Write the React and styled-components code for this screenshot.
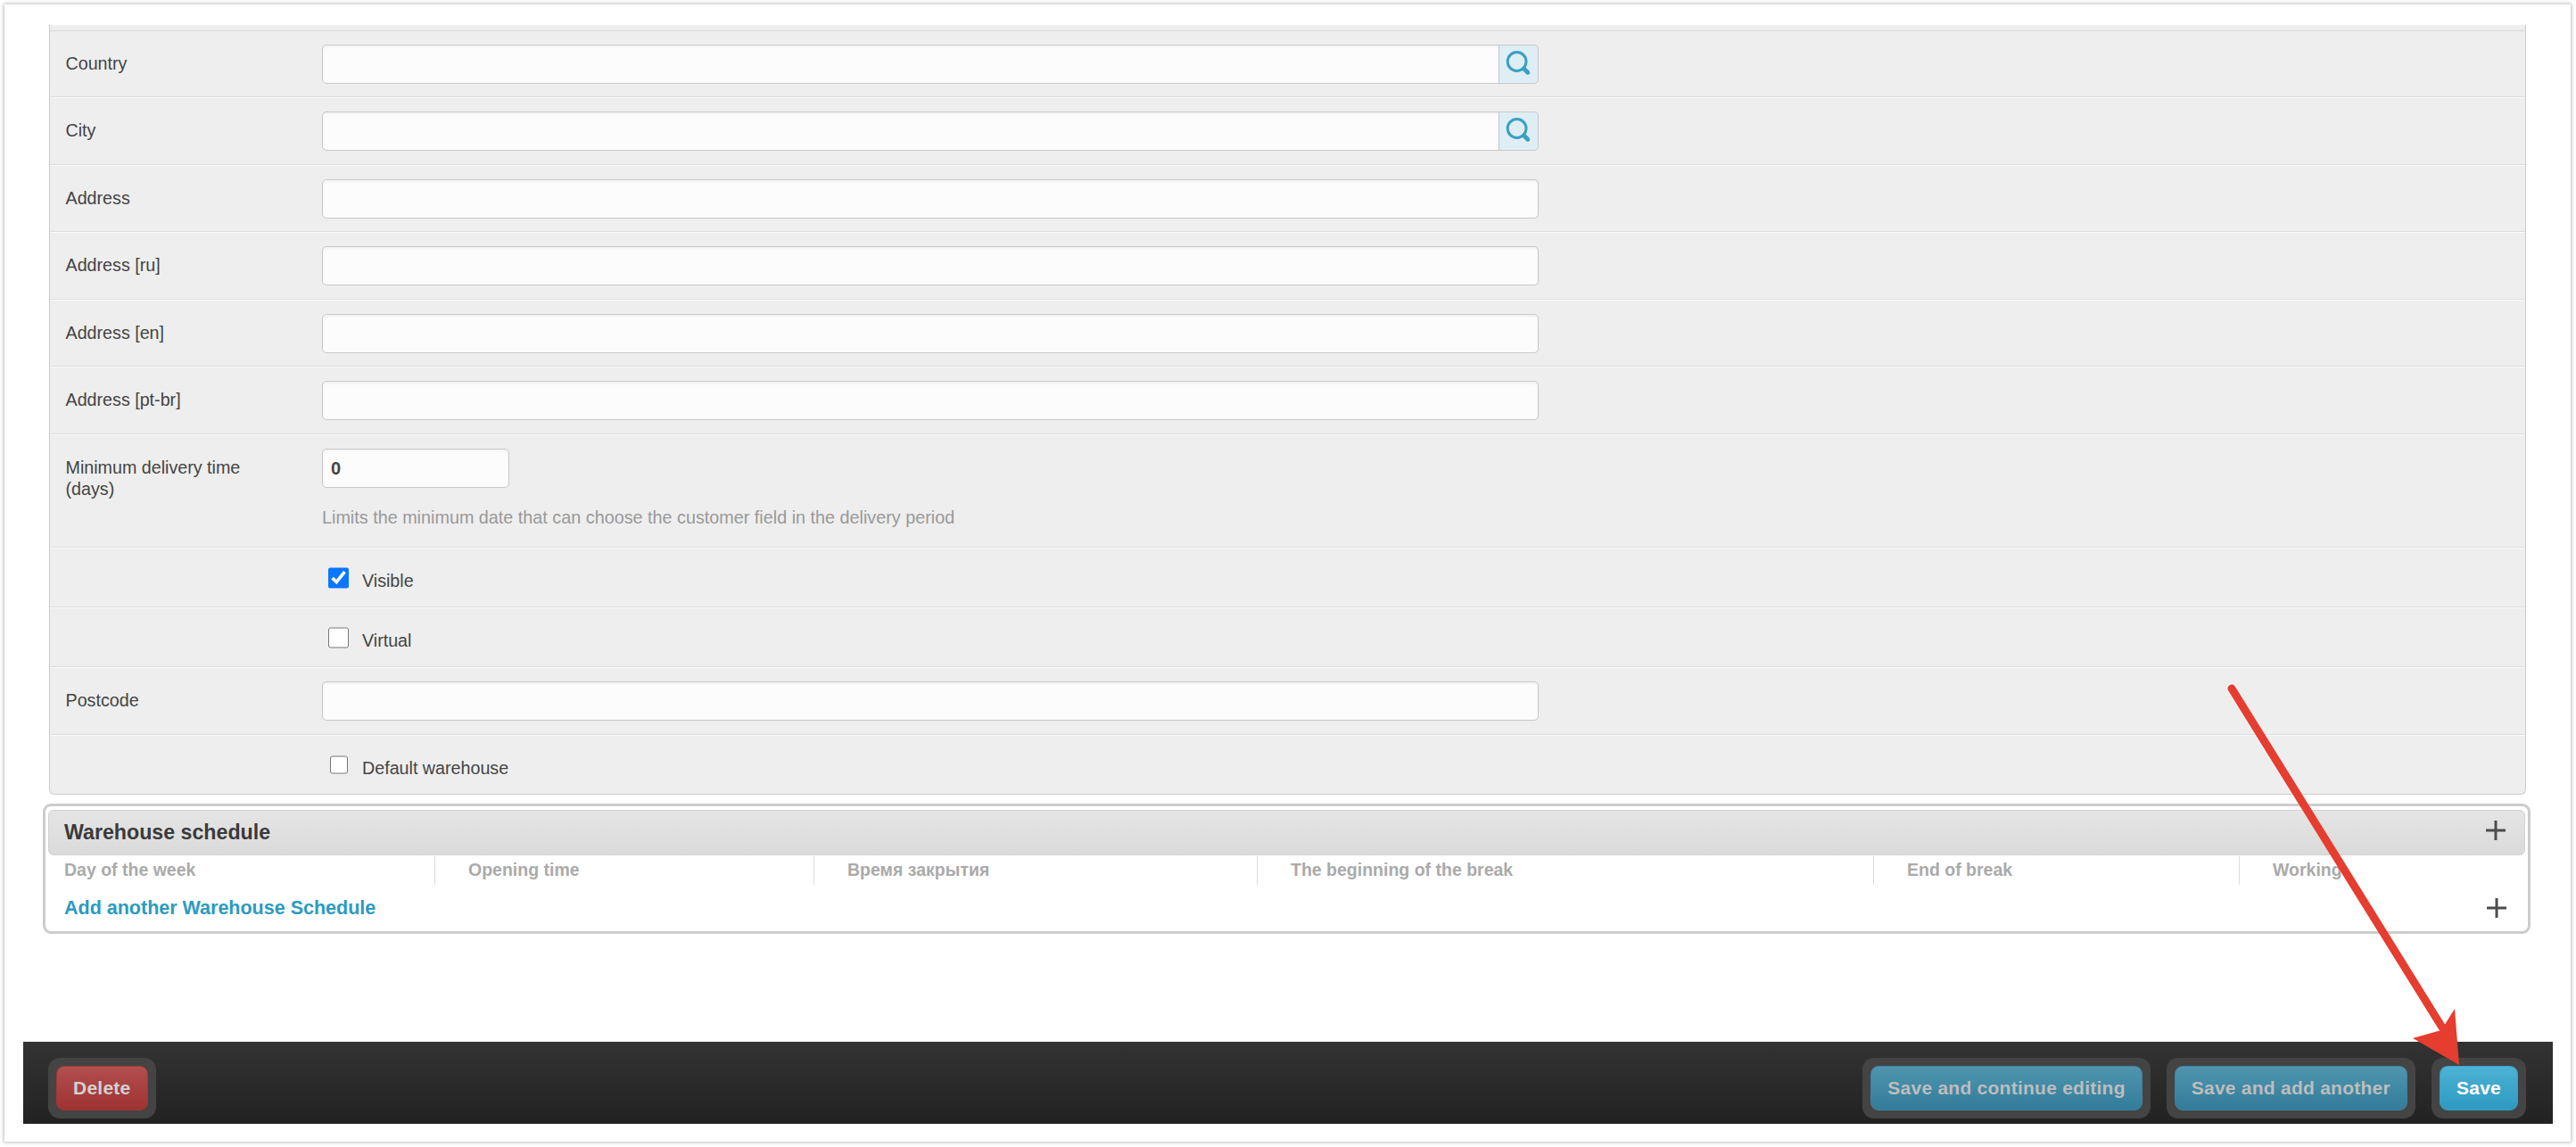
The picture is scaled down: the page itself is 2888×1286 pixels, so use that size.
import React from 'react';
import styled, { createGlobalStyle } from 'styled-components';

const GlobalStyle = createGlobalStyle`
  html, body {
    margin: 0;
    padding: 0;
    background: #fff;
    overflow: hidden;
  }
  body {
    font-family: "Liberation Sans", Arial, sans-serif;
    color: #333;
  }
`;

const Page = styled.div`
  position: relative;
  width: 2888px;
  height: 1286px;
  padding: 5px 6px 6px 5px;
  box-sizing: border-box;
`;

const Frame = styled.div`
  height: 100%;
  box-sizing: border-box;
  display: flex;
  flex-direction: column;
  background: #fff;
  padding: 22.5px 20px 20px 21px;
  box-shadow: 0 0 4px 1px #bdbdbd;
`;

const Panel = styled.div`
  margin: 0 30px 0 28.5px;
  padding-top: 6px;
  background: #eee;
  border: 1px solid #ccc;
  border-top: none;
  border-radius: 0 0 6px 6px;
`;

const Row = styled.div`
  display: grid;
  grid-template-columns: 287.5px 1fr;
  padding: ${p => p.$top || 15}px 0 ${p => p.$bottom || 14.6}px 18px;
  border-top: 1px solid #fafafa;
  border-bottom: ${p => (p.$last ? 'none' : '1px solid #ddd')};
  &:first-child {
    border-top-color: #d8d8d8;
  }
`;

const Label = styled.label`
  font-size: 19.7px;
  line-height: 23.5px;
  padding-top: 10px;
  color: #444;
`;

const InputGroup = styled.div`
  display: flex;
  width: 1364px;
`;

const TextInput = styled.input`
  box-sizing: border-box;
  width: ${p => p.$width || 1364}px;
  flex: ${p => (p.$grow ? 1 : 'none')};
  min-width: 0;
  height: 44px;
  display: block;
  padding: 0 9px;
  margin: 0;
  outline: none;
  font: bold 20px "Liberation Sans", Arial, sans-serif;
  color: #444;
  background: #fcfcfc;
  border: 1px solid #c8c8c8;
  border-radius: ${p => (p.$grow ? '5px 0 0 5px' : '5px')};
  box-shadow: inset 0 2px 3px #f2f2f2;
`;

const Lookup = styled.a`
  box-sizing: border-box;
  width: 45px;
  height: 44px;
  display: flex;
  align-items: center;
  justify-content: center;
  background: #dfeef5;
  border: 1px solid #c8c8c8;
  border-left: 1px solid #c4c4c4;
  border-radius: 0 5px 5px 0;
  margin-left: -1px;
`;

const Help = styled.p`
  margin: 21px 0 6.4px;
  font-size: 19.8px;
  line-height: 24px;
  color: #999;
`;

const CheckLabel = styled.label`
  display: flex;
  align-items: center;
  height: ${p => (p.$small ? 21 : 24)}px;
  font-size: 19.7px;
  color: #444;
  margin-left: ${p => (p.$small ? 9 : 7)}px;
`;

const Check = styled.input`
  margin: 0 ${p => (p.$small ? 16 : 15)}px 0 0;
  width: ${p => (p.$small ? 20 : 23)}px;
  height: ${p => (p.$small ? 21 : 24)}px;
  accent-color: #0b76ff;
`;

const CheckText = styled.span`
  line-height: 17px;
  padding-top: 7px;
`;

const Fieldset = styled.section`
  margin: 9.5px 25px 0 21.5px;
  padding: 4px 3px 0;
  border: 3px solid #ccc;
  border-radius: 9px;
`;

const Header = styled.div`
  box-sizing: border-box;
  height: 51px;
  display: flex;
  align-items: center;
  justify-content: space-between;
  padding: 0 21px 0 17.5px;
  background: linear-gradient(#e5e5e5, #dadada);
  border: 1px solid #d2d2d2;
  border-radius: 6px;
`;

const Title = styled.h2`
  margin: 0;
  font-size: 23.2px;
  font-weight: bold;
  color: #3a3a3a;
`;

const PlusIcon = styled.svg`
  display: block;
  margin-bottom: ${p => p.$up || 0}px;
`;

const Columns = styled.div`
  display: grid;
  grid-template-columns: 434.5px 425px 497px 691px 410px 1fr;
  height: 32px;
  margin-top: 1px;
`;

const Column = styled.div`
  padding-left: ${p => (p.$first ? 18.5 : 37)}px;
  font-size: 19.5px;
  font-weight: bold;
  line-height: 30px;
  color: #aaa;
  border-right: ${p => (p.$end ? 'none' : '1px solid #ddd')};
`;

const AddRow = styled.div`
  height: 52.5px;
  display: flex;
  align-items: center;
  justify-content: space-between;
  padding: 0 21px 0 18.5px;
`;

const AddLink = styled.a`
  font-size: 21.5px;
  font-weight: bold;
  color: #2a9bc1;
`;

const Footer = styled.div`
  margin-top: auto;
  height: 92px;
  box-sizing: border-box;
  padding: 18px 30px 6px 28px;
  display: flex;
  justify-content: space-between;
  background: linear-gradient(#333, #222);
`;

const Actions = styled.div`
  display: flex;
  gap: 18px;
`;

const ButtonWrap = styled.div`
  padding: 9px;
  background: #444;
  border-radius: 13px;
`;

const tones = {
  danger: { bg: 'linear-gradient(#b24f4f, #a03232)', text: '#d2d2d2', line: '#9c3a3a' },
  muted: { bg: 'linear-gradient(#4f95af, #327c9a)', text: '#bdbdbd', line: '#3f83a0' },
  primary: { bg: 'linear-gradient(#4db2d5, #2e9ac1)', text: '#fff', line: '#3a9fc5' },
};

const Button = styled.button`
  box-sizing: border-box;
  height: 50px;
  padding: 0 18px;
  font: bold 21px "Liberation Sans", Arial, sans-serif;
  letter-spacing: 0.25px;
  color: ${p => tones[p.$tone].text};
  background: ${p => tones[p.$tone].bg};
  border: 1px solid ${p => tones[p.$tone].line};
  border-radius: 9px;
`;

const ArrowLayer = styled.svg`
  position: absolute;
  left: 0;
  top: 0;
  pointer-events: none;
`;

const Search = () => (
  <svg width="30" height="30" viewBox="0 0 30 30" fill="none">
    <circle cx="12.6" cy="12" r="10.4" stroke="#3aa0c2" strokeWidth="3" />
    <path d="M20.5 20 L24.8 24.2" stroke="#3aa0c2" strokeWidth="5" strokeLinecap="round" />
  </svg>
);

const Plus = ({ up }) => (
  <PlusIcon $up={up} width="22" height="22" viewBox="0 0 22 22">
    <path d="M0 11 H22 M11 0 V22" stroke="#4d4d4d" strokeWidth="3" />
  </PlusIcon>
);

const plainRows = ['Address', 'Address [ru]', 'Address [en]', 'Address [pt-br]'];

const columns = [
  'Day of the week',
  'Opening time',
  'Время закрытия',
  'The beginning of the break',
  'End of break',
  'Working',
];

const App = () => {
  return (
    <Page>
      <GlobalStyle />
      <Frame>
        <Panel>
          {['Country', 'City'].map(name => (
            <Row key={name}>
              <Label>{name}</Label>
              <InputGroup>
                <TextInput $grow />
                <Lookup><Search /></Lookup>
              </InputGroup>
            </Row>
          ))}
          {plainRows.map(name => (
            <Row key={name}>
              <Label>{name}</Label>
              <div><TextInput /></div>
            </Row>
          ))}
          <Row>
            <Label>Minimum delivery time<br />(days)</Label>
            <div>
              <TextInput $width={210} defaultValue="0" />
              <Help>Limits the minimum date that can choose the customer field in the delivery period</Help>
            </div>
          </Row>
          <Row $top={21.4} $bottom={19.6}>
            <span />
            <CheckLabel>
              <Check type="checkbox" defaultChecked />
              <CheckText>Visible</CheckText>
            </CheckLabel>
          </Row>
          <Row $top={21.4} $bottom={19.6}>
            <span />
            <CheckLabel>
              <Check type="checkbox" />
              <CheckText>Virtual</CheckText>
            </CheckLabel>
          </Row>
          <Row>
            <Label>Postcode</Label>
            <div><TextInput /></div>
          </Row>
          <Row $top={22.5} $bottom={22.3} $last>
            <span />
            <CheckLabel $small>
              <Check type="checkbox" $small />
              <CheckText>Default warehouse</CheckText>
            </CheckLabel>
          </Row>
        </Panel>

        <Fieldset>
          <Header>
            <Title>Warehouse schedule</Title>
            <Plus up={5} />
          </Header>
          <Columns>
            {columns.map((name, i) => (
              <Column key={name} $first={i === 0} $end={i === columns.length - 1}>{name}</Column>
            ))}
          </Columns>
          <AddRow>
            <AddLink>Add another Warehouse Schedule</AddLink>
            <Plus />
          </AddRow>
        </Fieldset>

        <Footer>
          <ButtonWrap>
            <Button $tone="danger">Delete</Button>
          </ButtonWrap>
          <Actions>
            <ButtonWrap><Button $tone="muted">Save and continue editing</Button></ButtonWrap>
            <ButtonWrap><Button $tone="muted">Save and add another</Button></ButtonWrap>
            <ButtonWrap><Button $tone="primary">Save</Button></ButtonWrap>
          </Actions>
        </Footer>
      </Frame>

      <ArrowLayer width="2888" height="1286" viewBox="0 0 2888 1286">
        <path d="M2502 772 L2738 1152" stroke="#e53d30" strokeWidth="9" strokeLinecap="round" />
        <polygon points="2752,1131 2757,1194 2705,1164 2737,1155" fill="#e53d30" />
      </ArrowLayer>
    </Page>
  );
};

export default App;
